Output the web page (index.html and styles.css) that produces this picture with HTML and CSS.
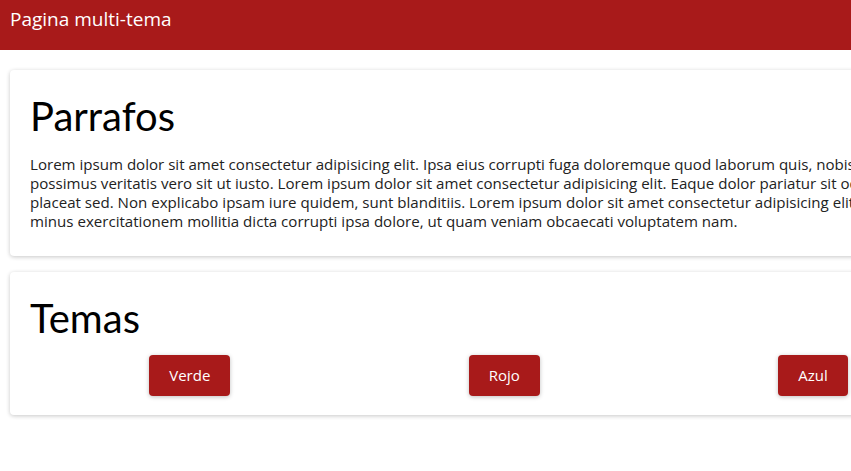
FILE: index.html
```html
<!DOCTYPE html>
<html lang="es">
<head>
<meta charset="utf-8">
<title>Pagina multi-tema</title>
<link rel="stylesheet" href="styles.css">
</head>
<body>
<div class="page">
  <header class="topbar">Pagina multi-tema</header>
  <main class="content">
    <section class="card">
      <h1 class="card-title">Parrafos</h1>
      <p class="card-text">Lorem ipsum dolor sit amet consectetur adipisicing elit. Ipsa eius corrupti fuga doloremque quod laborum quis, nobis aperiam magni,<br>possimus veritatis vero sit ut iusto. Lorem ipsum dolor sit amet consectetur adipisicing elit. Eaque dolor pariatur sit odio,<br>placeat sed. Non explicabo ipsam iure quidem, sunt blanditiis. Lorem ipsum dolor sit amet consectetur adipisicing elit. Quas,<br>minus exercitationem mollitia dicta corrupti ipsa dolore, ut quam veniam obcaecati voluptatem nam.</p>
    </section>
    <section class="card card-themes">
      <h1 class="card-title">Temas</h1>
      <div class="theme-row">
        <button class="theme-btn">Verde</button>
        <button class="theme-btn">Rojo</button>
        <button class="theme-btn">Azul</button>
      </div>
    </section>
  </main>
</div>
</body>
</html>
```
FILE: styles.css
```css
html {
  overflow: hidden;
}
body {
  margin: 0;
  font-family: "Open Sans", "Noto Sans", sans-serif;
  color: #000;
  background: #fff;
}
.page {
  width: 997px;
}
.topbar {
  height: 50px;
  background: #a81a1a;
  color: #fff;
  font-size: 19px;
  line-height: 38px;
  padding-left: 10px;
  box-sizing: border-box;
}
.content {
  padding: 20px 10px;
  display: flex;
  flex-direction: column;
  gap: 16px;
}
.card {
  background: #fff;
  border-radius: 4px;
  box-shadow: 0 1px 4px rgba(0, 0, 0, 0.22);
  padding: 20px 20px 19px;
}
.card-title {
  margin: 0;
  font-family: Lato, "Open Sans", sans-serif;
  font-size: 40px;
  font-weight: 400;
  line-height: 53px;
}
.card-text {
  margin: 12px 0 6px;
  font-size: 15.1px;
  line-height: 19px;
  color: #222;
  white-space: nowrap;
}
.theme-row {
  margin-top: 10px;
  display: flex;
  justify-content: space-around;
}
.theme-btn {
  font-family: inherit;
  font-size: 15px;
  line-height: 21px;
  padding: 10px 20px;
  border: none;
  border-radius: 4px;
  background: #a81a1a;
  color: #fff;
  box-shadow: 0 1px 4px rgba(0, 0, 0, 0.25);
}
```
